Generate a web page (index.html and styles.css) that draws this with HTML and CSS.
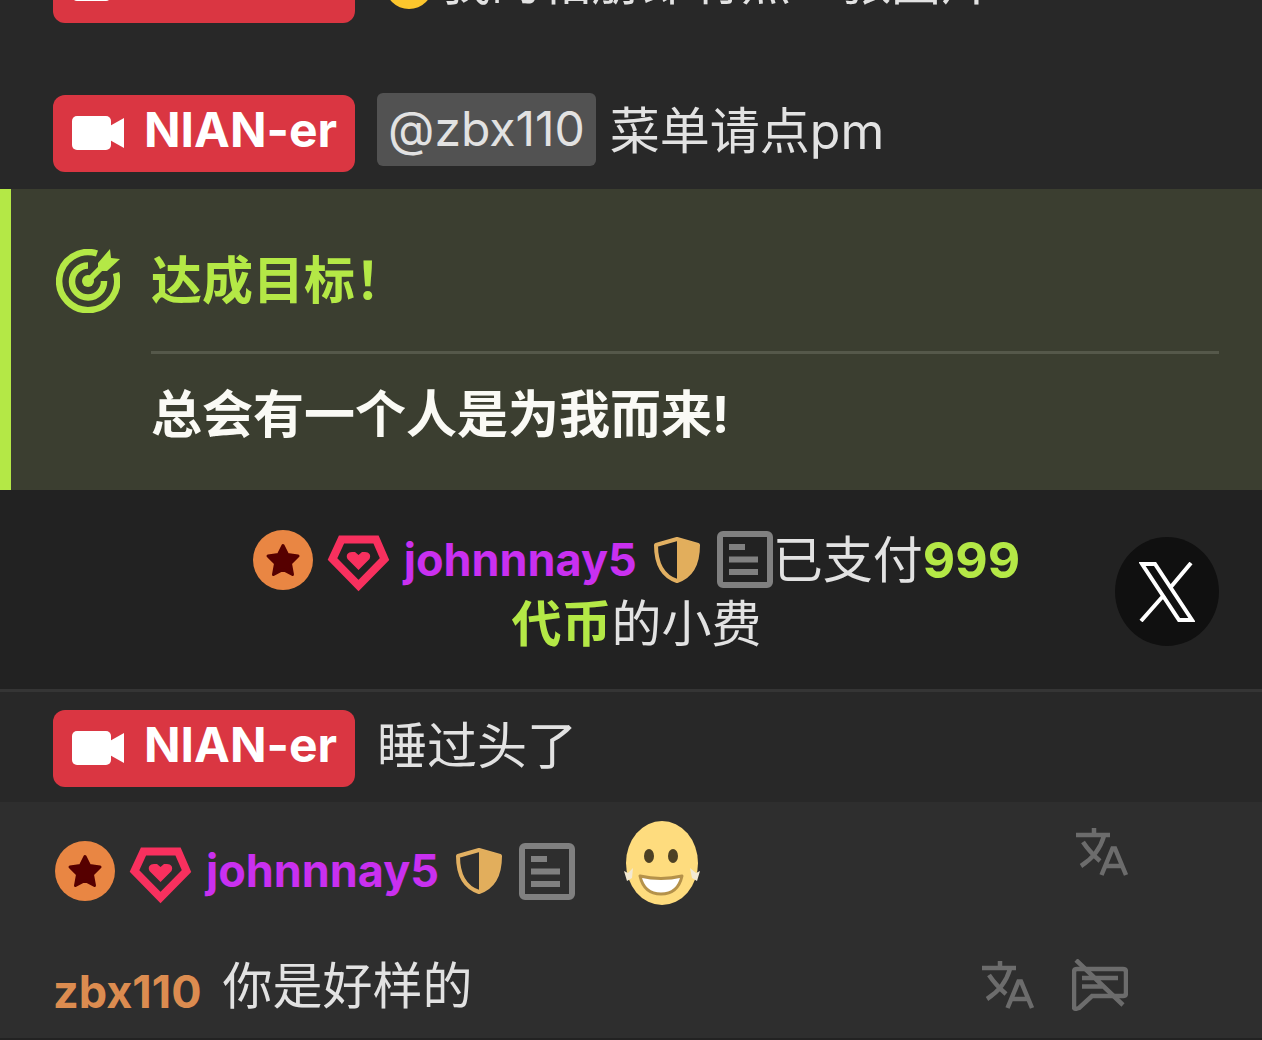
FILE: index.html
```html
<!DOCTYPE html>
<html lang="zh-CN">
<head>
  <meta charset="UTF-8">
  <meta name="viewport" content="width=device-width, initial-scale=1.0">
  <title>Chat</title>
  <link rel="stylesheet" href="styles.css">
</head>
<body>

<!-- shared icons -->
<svg class="sprite" width="0" height="0">
  <symbol id="i-camera" viewBox="0 0 52 34">
    <rect x="0" y="0" width="39" height="34" rx="5"/>
    <path d="M36 11 52 2V32L36 23Z"/>
  </symbol>
  <symbol id="i-star" viewBox="0 0 60 60">
    <circle cx="30" cy="30" r="30" fill="#e98643"/>
    <path d="M30 15.500 34.500 24.500 45 26 37.500 33.500 39.500 44.500 30 39.500 20.500 44.500 22.500 33.500 15 26 25.500 24.500Z" fill="#560000" stroke="#560000" stroke-width="3" stroke-linejoin="round"/>
  </symbol>
  <symbol id="i-gem" viewBox="0 0 63 57">
    <path d="M14.500 4.500H49L57.500 24 31.500 50.500 5.500 24Z" fill="none" stroke="#f8305e" stroke-width="8"/>
    <path d="M31.500 35 20.500 24C18.500 20 21 17 25 17H28L31.500 20 35 17H38C42 17 44.500 20 42.500 24Z" fill="#f8305e"/>
  </symbol>
  <symbol id="i-shield" viewBox="0 0 46 46">
    <path d="M23 2 44 8C44 25 38 39 23 44 8 39 2 25 2 8Z" fill="none" stroke="#e2b062" stroke-width="4" stroke-linejoin="round"/>
    <path d="M23 1 45 7C45 26 38 40 23 45Z" fill="#e2ae5c"/>
  </symbol>
  <symbol id="i-note" viewBox="0 0 56 57">
    <rect x="3" y="3" width="50" height="51" rx="3" fill="none" stroke="#808080" stroke-width="6"/>
    <path d="M12 16H28M12 28.500H41M12 41H41" stroke="#808080" stroke-width="6"/>
  </symbol>
  <symbol id="i-translate" viewBox="0 0 52 48">
    <path d="M0 7H34M18 0V7M28 8C24 22 16 31 5 38M7 14C11 20 16 26 24 33" fill="none" stroke="#6c6c6c" stroke-width="4.500"/>
    <path d="M25.500 47 36.500 20.500H39L50 47M29.500 38H46" fill="none" stroke="#6c6c6c" stroke-width="4.500"/>
  </symbol>
  <symbol id="i-mute" viewBox="0 0 56 52">
    <path d="M5 10H51Q54 10 54 13V34Q54 37 51 37H20L7 49Q2 51 2 48V13Q2 10 5 10Z" fill="none" stroke="#6c6c6c" stroke-width="4.500"/>
    <path d="M10 19H46M10 27.500H32M4 1 51 46" stroke="#6c6c6c" stroke-width="4.500"/>
  </symbol>
</svg>

<main class="chat">
  <div class="message">
    <button class="host"><svg class="camera"><use href="#i-camera"/></svg>NIAN-er</button>
    <svg class="dot" viewBox="0 0 48 48"><circle cx="24" cy="24" r="24" fill="#fcc62d"/></svg>
    <span class="text">我的相册即有点一张图片</span>
  </div>

  <div class="message message-last">
    <button class="host"><svg class="camera"><use href="#i-camera"/></svg>NIAN-er</button>
    <a class="mention" href="#">@zbx110</a>
    <span class="text">菜单请点pm</span>
  </div>

  <section class="goal">
    <svg class="target" viewBox="0 0 64 64">
      <path d="M41 4.500A29 29 0 1 0 60 24" fill="none" stroke="#b4e846" stroke-width="6.500"/>
      <path d="M32 16.500A16 16 0 1 0 48 32" fill="none" stroke="#b4e846" stroke-width="6.500"/>
      <circle cx="32" cy="32" r="6" fill="#b4e846"/>
      <path d="M32 32 48 16" stroke="#b4e846" stroke-width="6"/>
      <path d="M42 14 54 0 55 9 64 10 51 22 42 22Z" fill="#b4e846"/>
    </svg>
    <div class="goal-body">
      <h2 class="goal-title">达成目标！</h2>
      <p class="goal-text">总会有一个人是为我而来!</p>
    </div>
  </section>

  <section class="tip">
    <div class="tip-body">
      <div class="tip-line">
        <span class="user">
          <svg class="star"><use href="#i-star"/></svg>
          <svg class="gem"><use href="#i-gem"/></svg>
          <a class="name" href="#">johnnnay5</a>
          <svg class="shield"><use href="#i-shield"/></svg>
          <svg class="note"><use href="#i-note"/></svg>
        </span>
        <span>已支付<b class="amount">999</b></span>
      </div>
      <div><b class="token">代币</b>的小费</div>
    </div>
    <button class="share" aria-label="X">
      <svg class="x-logo" viewBox="0 0 56 60">
        <path d="M3 2H16L53 58H40Z" fill="none" stroke="#fff" stroke-width="4"/>
        <path d="M52 1 31 26M2 59 25 33" stroke="#fff" stroke-width="4"/>
      </svg>
    </button>
  </section>

  <div class="message message-plain">
    <button class="host"><svg class="camera"><use href="#i-camera"/></svg>NIAN-er</button>
    <span class="text">睡过头了</span>
  </div>

  <div class="message message-user">
    <span class="user">
      <svg class="star"><use href="#i-star"/></svg>
      <svg class="gem"><use href="#i-gem"/></svg>
      <a class="name" href="#">johnnnay5</a>
      <svg class="shield"><use href="#i-shield"/></svg>
      <svg class="note"><use href="#i-note"/></svg>
    </span>
    <svg class="smile" viewBox="0 0 76 86">
      <ellipse cx="38" cy="43" rx="36" ry="42" fill="#fedc7e"/>
      <ellipse cx="25" cy="36" rx="5" ry="7" fill="#4c4024"/>
      <ellipse cx="49" cy="36" rx="5" ry="7" fill="#4c4024"/>
      <path d="M16 56Q37 61 58 56Q54 74 37 74 20 74 16 56Z" fill="#fff" stroke="#b5924a" stroke-width="3" stroke-linejoin="round"/>
      <path d="M0 51 4 53 9 48 8 58 3 61ZM76 51 72 53 66 48 68 58 73 61Z" fill="#f3e9d2"/>
    </svg>
    <div class="actions">
      <button aria-label="翻译"><svg class="translate"><use href="#i-translate"/></svg></button>
    </div>
  </div>

  <div class="message message-reply">
    <a class="name name-orange" href="#">zbx110</a>
    <span class="text">你是好样的</span>
    <div class="actions">
      <button aria-label="翻译"><svg class="translate"><use href="#i-translate"/></svg></button>
      <button aria-label="屏蔽"><svg class="mute"><use href="#i-mute"/></svg></button>
    </div>
  </div>
</main>

</body>
</html>
```
FILE: styles.css
```css
* {
  box-sizing: border-box;
}

body {
  margin: 0;
  background-color: #282828;
  color: #e2e2e2;
  font-family: Inter, "Noto Sans CJK SC", sans-serif;
  font-size: 50px;
  line-height: 64px;
}

a {
  color: inherit;
  text-decoration: none;
}

button {
  border: none;
  padding: 0;
  background: none;
  color: inherit;
  font: inherit;
  cursor: pointer;
}

svg {
  display: block;
  flex-shrink: 0;
}

.sprite {
  position: absolute;
}

/* the list is kept scrolled to the newest message */
.chat {
  display: flex;
  flex-direction: column;
  justify-content: flex-end;
  height: 100vh;
  overflow: hidden;
}

.chat > * {
  flex-shrink: 0;
}

.message {
  display: flex;
  align-items: center;
  padding: 18px 134px 52px 53px;
}

.message .text {
  margin-bottom: 6px;
}

.message-last {
  padding-bottom: 15px;
}

.host {
  display: flex;
  align-items: center;
  height: 77px;
  margin-right: 22px;
  padding: 0 18px 8px 19px;
  border-radius: 12px;
  background-color: #da3642;
  color: #fff;
  font-size: 48px;
  font-weight: 700;
}

.camera {
  width: 52px;
  height: 34px;
  margin: 6px 20px 0 0;
  fill: #fff;
}

.dot {
  width: 48px;
  height: 48px;
  margin: 0 8px;
}

.mention {
  height: 73px;
  margin: 0 14px 8px 0;
  padding: 4px 11px;
  border-radius: 6px;
  background-color: #525252;
  font-size: 48px;
}

.goal {
  display: flex;
  padding: 60px 43px 43px 45px;
  border-left: 11px solid #b4e846;
  background-color: #3b3e30;
}

.target {
  width: 64px;
  height: 64px;
  margin-right: 31px;
}

.goal-body {
  flex: 1;
}

.goal-title {
  margin: 0;
  padding-bottom: 38px;
  border-bottom: 3px solid #55584a;
  color: #b4e846;
  font-size: 51px;
  font-weight: 700;
}

.goal-text {
  margin: 0;
  padding-top: 29px;
  color: #fafaf5;
  font-size: 51px;
  font-weight: 700;
}

.tip {
  display: flex;
  align-items: center;
  padding: 37px 43px 33px 158px;
  border-bottom: 3px solid #353535;
  background-color: #222;
}

.tip-body {
  flex: 1;
  text-align: center;
}

.tip-line {
  display: flex;
  justify-content: center;
  align-items: center;
}

.user {
  display: flex;
  align-items: center;
}

.star {
  width: 60px;
  height: 60px;
  margin-right: 14px;
}

.gem {
  width: 63px;
  height: 57px;
  margin: 8px 14px 0 0;
}

.name {
  color: #c930f0;
  font-size: 45px;
  font-weight: 700;
}

.shield {
  width: 46px;
  height: 46px;
  margin: 0 17px;
}

.note {
  width: 56px;
  height: 57px;
}

.amount,
.token {
  color: #b4e846;
  font-weight: 700;
}

.share {
  display: flex;
  justify-content: center;
  align-items: center;
  width: 104px;
  height: 109px;
  border-radius: 50%;
  background-color: #101010;
}

.x-logo {
  width: 56px;
  height: 60px;
}

.message-plain {
  padding-bottom: 15px;
}

.message-user {
  padding-bottom: 28px;
  background-color: #2e2e2e;
}

.message-user .user {
  margin: 16px 0 0 2px;
}

.message-user .actions {
  margin-bottom: 22px;
}

.smile {
  width: 76px;
  height: 86px;
  margin-left: 49px;
}

.actions {
  display: flex;
  align-items: center;
  gap: 38px;
  margin-left: auto;
}

.translate {
  width: 52px;
  height: 48px;
}

.mute {
  width: 56px;
  height: 52px;
}

.message-reply {
  padding-top: 20px;
  padding-bottom: 14px;
  border-bottom: 2px solid #222;
  background-color: #2e2e2e;
}

.message-reply .actions {
  margin-bottom: 8px;
}

.name-orange {
  margin: 6px 21px 0 0;
  color: #dc8c50;
}
```
